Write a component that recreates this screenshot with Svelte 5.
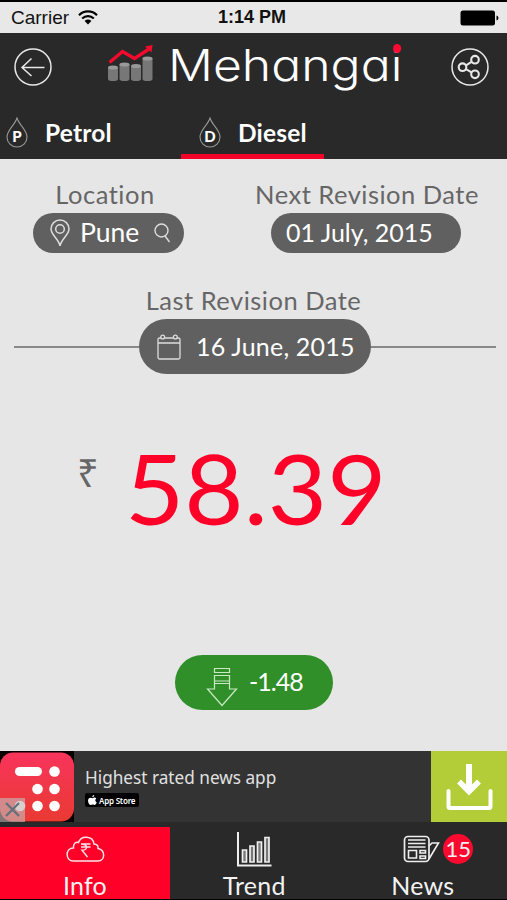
<script lang="ts">
  let city = 'Pune';
  let nextRevision = '01 July, 2015';
  let lastRevision = '16 June, 2015';
  let price = '58.39';
  let change = '-1.48';
  let newsCount = 15;

  let fuel = 'Diesel';
  let page = 'Info';

  const bars = [
    {x: 0, y: 21},
    {x: 11.5, y: 18},
    {x: 23, y: 19.5},
    {x: 34.5, y: 12}
  ];
</script>

<div class="screen">
  <div class="status">
    <span class="carrier">Carrier</span>
    <svg class="wifi" width="20" height="15" viewBox="0 0 20 15" fill="none" stroke="#000" stroke-width="2.2">
      <path d="M1 5.2a12.7 12.7 0 0 1 18 0M4.2 8.5a8.2 8.2 0 0 1 11.6 0"/>
      <path d="M6.6 11a4.8 4.8 0 0 1 6.8 0L10 14.5z" fill="#000" stroke="none"/>
    </svg>
    <span class="time">1:14 PM</span>
    <svg class="battery" width="39" height="16" viewBox="0 0 39 16">
      <rect x=".5" y=".5" width="34.5" height="15" rx="2.5"/>
      <path d="M36.5 5.5c2.6 1 2.6 4 0 5z"/>
    </svg>
  </div>

  <header>
    <div class="brand-row">
      <a class="round" href="#back" aria-label="Back">
        <svg width="38" height="38" viewBox="0 0 38 38" fill="none" stroke="#e8e8e8" stroke-width="1.5">
          <circle cx="19" cy="19" r="18"/>
          <path d="M30.5 19.5H8M17.5 10.5L8 19.5l9.5 8.5"/>
        </svg>
      </a>
      <div class="brand">
        <svg width="47" height="38" viewBox="0 0 47 38">
          {#each bars as bar}
            <path d="M{bar.x} {bar.y + 1.5}v{32.5 - bar.y}a5 2 0 0 0 10 0v-{32.5 - bar.y}z" fill="#777"/>
            <ellipse cx={bar.x + 5} cy={bar.y + 1.5} rx="5" ry="2" fill="#999"/>
          {/each}
          <path d="M1.5 17.5L14.5 6.5 26.5 13.5 41 4" fill="none" stroke="#f30a2c" stroke-width="3.3"/>
          <path d="M37 1.5L44.5 0 43.5 7.5z" fill="#f30a2c"/>
        </svg>
        <h1>Mehangai<i></i></h1>
      </div>
      <a class="round" href="#share" aria-label="Share">
        <svg width="38" height="38" viewBox="0 0 38 38" fill="none" stroke="#e8e8e8" stroke-width="1.5">
          <circle cx="19" cy="19" r="18"/>
          <g stroke-width="2.1">
            <circle cx="11.5" cy="19.2" r="3.8"/>
            <circle cx="24" cy="11.7" r="3.8"/>
            <circle cx="24" cy="26.3" r="3.8"/>
            <path d="M15 17.3l5.5-3.4M15 21.2l5.5 3.2"/>
          </g>
        </svg>
      </a>
    </div>
    <nav class="fuels">
      {#each ['Petrol', 'Diesel'] as name}
        <a href="#{name}" class="fuel" class:active={fuel === name}>
          <span class="drop">
            <svg width="22" height="31" viewBox="0 0 22 31" fill="none" stroke="#999" stroke-width="1.1">
              <path d="M11 1C9 8 1 13 1 20a10 10 0 0 0 20 0C21 13 13 8 11 1z"/>
            </svg>
            <b>{name[0]}</b>
          </span>
          <span class="fuel-name">{name}</span>
        </a>
      {/each}
    </nav>
  </header>

  <main>
    <div class="top-info">
      <section class="location">
        <h2>Location</h2>
        <div class="pill">
          <svg class="pin" width="20" height="28" viewBox="0 0 20 28" fill="none" stroke="#ddd" stroke-width="1.5">
            <path d="M10 27C9 20 1 16 1 10a9 9 0 0 1 18 0c0 6-8 10-9 17z"/>
            <circle cx="10" cy="10" r="4.3"/>
          </svg>
          <span>{city}</span>
          <svg class="search" width="17" height="20" viewBox="0 0 17 20" fill="none" stroke="#ddd" stroke-width="1.4">
            <circle cx="7.5" cy="7.5" r="6.5"/>
            <path d="M11 13l4.5 6"/>
          </svg>
        </div>
      </section>
      <section class="next">
        <h2>Next Revision Date</h2>
        <div class="pill"><span>{nextRevision}</span></div>
      </section>
    </div>

    <section class="last">
      <h2>Last Revision Date</h2>
      <div class="line-row">
        <div class="line"></div>
        <div class="pill big">
          <svg width="24" height="26" viewBox="0 0 24 26" fill="none" stroke="#ddd" stroke-width="1.3">
            <path d="M4 4H2.5Q1 4 1 5.5v18Q1 25 2.5 25h19q1.5 0 1.5-1.5v-18Q23 4 21.5 4H20M7.5 4h9M1 9h22"/>
            <circle cx="5.7" cy="3" r="1.9"/>
            <circle cx="18.3" cy="3" r="1.9"/>
          </svg>
          <span>{lastRevision}</span>
        </div>
        <div class="line"></div>
      </div>
    </section>

    <div class="price">
      <span class="rupee">₹</span>
      <span class="amount">{price}</span>
    </div>

    <div class="change">
      <svg width="32" height="40" viewBox="0 0 32 40" fill="none" stroke="#c9eac5" stroke-width="1.2">
        <path d="M8.5 1.5h15v4h-15zM8.5 8.5h15v5.5h-15zM8.5 14v2.5h15V14M8.5 16.5V22H1.5L16 38.5 30.5 22h-7v-5.5"/>
      </svg>
      <span>{change}</span>
    </div>
  </main>

  <div class="ad">
    <div class="ad-icon">
      <svg width="74" height="71" viewBox="0 0 74 71">
        <defs>
          <linearGradient id="ad-red" x1="0" y1="0" x2="0" y2="1">
            <stop offset="0" stop-color="#f8345c"/>
            <stop offset="1" stop-color="#e93a32"/>
          </linearGradient>
        </defs>
        <rect width="74" height="71" fill="#080000"/>
        <rect y="1.5" width="74" height="69" rx="13" fill="url(#ad-red)"/>
        <g fill="#fff">
          <rect x="15" y="16" width="27" height="9" rx="4.5"/>
          <circle cx="54.5" cy="20.5" r="5.3"/>
          <circle cx="37.5" cy="38" r="5.3"/>
          <circle cx="54.5" cy="38" r="5.3"/>
          <circle cx="20" cy="55" r="5.3"/>
          <circle cx="37.5" cy="55" r="5.3"/>
          <circle cx="54.5" cy="55" r="5.3"/>
        </g>
        <rect y="47" width="25" height="24" fill="#c6b5b5" opacity=".65"/>
        <path d="M6 52l13 13M19 52L6 65" stroke="#61717c" stroke-width="2.2"/>
      </svg>
    </div>
    <div class="ad-text">
      <p>Highest rated news app</p>
      <span class="store">
        <svg width="9" height="10" viewBox="0 0 18 20" fill="#fff">
          <path d="M12.5 0c0 2.5-1.7 4.5-4 4.5C8.3 2.3 10.2.3 12.5 0zM16.5 7c-3 2-2.5 6 1 7.3C16.5 17 14.7 20 12.8 20c-1.4 0-1.9-.8-3.5-.8S7 20 5.8 20C3 20 0 15.5 0 11.3 0 7.5 2.5 5.3 5.2 5.3c1.6 0 2.8 1 3.9 1 1 0 2.4-1.1 4.2-1.1 1.3 0 2.5.7 3.2 1.8z"/>
        </svg>
        App Store
      </span>
    </div>
    <a class="download" href="#download" aria-label="Download">
      <svg width="48" height="48" viewBox="0 0 48 48" fill="none" stroke="#fff">
        <path d="M3.5 28v15.5q0 1.5 1.5 1.5h39q1.5 0 1.5-1.5V28" stroke-width="4" stroke-linecap="round"/>
        <path d="M24 1v26" stroke-width="6"/>
        <path d="M14 18.5L24 28.5 34 18.5" stroke-width="5.5"/>
      </svg>
    </a>
  </div>

  <nav class="tabs">
    <a href="#info" class="tab" class:active={page === 'Info'}>
      <span class="icon">
        <svg width="39" height="26" viewBox="0 0 39 26" fill="none" stroke="#ffe5e8" stroke-width="1.5">
          <path d="M7.5 25C-1 25-1 12 7.5 12 7 7 10.5 5.5 12.5 6.5 15-1 27-.5 28 8c3 0 4.3 2 4 4.5 8 2 7 12.5 0 12.5z"/>
          <path d="M15 8h9.5M15 11h9.5M15 8c7 0 7.5 6.3 1 6.3L21.5 21" stroke-width="1.4"/>
        </svg>
      </span>
      <span class="label">Info</span>
    </a>
    <a href="#trend" class="tab" class:active={page === 'Trend'}>
      <span class="icon">
        <svg width="36" height="36" viewBox="0 0 36 36" fill="none" stroke="#eee" stroke-width="1.7">
          <path d="M2 1v33.5h33.5" stroke-width="2"/>
          <path d="M6.5 31V19h4v12zM14 31V15h4v16zM21.5 31V11h4v20zM29 31V6.5h4V31z" fill="#777"/>
        </svg>
      </span>
      <span class="label">Trend</span>
    </a>
    <a href="#news" class="tab" class:active={page === 'News'}>
      <span class="icon news">
        <svg width="38" height="28" viewBox="0 0 38 28" fill="none" stroke="#eee" stroke-width="1.7">
          <rect x="1.5" y="1.5" width="24.5" height="25" rx="3.5"/>
          <path d="M5 5h17.5M5 8.5h17.5M5 12h17.5M5.5 15.5h8v7.5h-8zM17 15.5h5.5V18H17zM17 21h5.5v2.5H17zM26 24l9.5-16H29l-3 3" stroke-width="1.6"/>
        </svg>
        <span class="badge">{newsCount}</span>
      </span>
      <span class="label">News</span>
    </a>
  </nav>
</div>

<style>
  :global(body) {
    margin: 0;
  }
  .screen {
    width: 507px;
    height: 900px;
    box-sizing: border-box;
    border-top: 2px solid #000;
    border-bottom: 1px solid #000;
    display: flex;
    flex-direction: column;
    overflow: hidden;
    background: #e6e6e6;
    font-family: Lato, "Noto Sans", sans-serif;
    font-variant-ligatures: none;
  }
  a {
    color: inherit;
    text-decoration: none;
  }
  svg {
    display: block;
    flex: none;
  }
  h1, h2, p {
    margin: 0;
    font-weight: 400;
  }

  .status {
    height: 31px;
    display: flex;
    align-items: center;
    padding: 0 8px 0 11px;
    box-sizing: border-box;
    background: #e8e8e8;
    color: #111;
    font: 19px/31px "Liberation Sans", sans-serif;
  }
  .carrier {
    line-height: 33px;
  }
  .wifi {
    margin: -1px 0 0 9px;
  }
  .time {
    flex: 1;
    padding-left: 120px;
    font-weight: 700;
    font-size: 18px;
    line-height: 33px;
  }

  header {
    height: 126px;
    background: #292929;
    color: #fff;
  }
  .brand-row {
    height: 72px;
    display: flex;
    align-items: flex-start;
    padding: 15px 18px 0 14px;
    justify-content: space-between;
    box-sizing: border-box;
  }
  .brand {
    display: flex;
    width: 293px;
    margin: -3px 0 0 5px;
  }
  .brand h1 {
    position: relative;
    margin: -6px 0 0 13px;
    font-family: Inter, Lato, sans-serif;
    font-feature-settings: "cv11";
    font-size: 43px;
    font-weight: 300;
    line-height: 52px;
    height: 52px;
    transform: scaleX(1.16);
    transform-origin: 0 0;
  }
  .brand h1 i {
    position: absolute;
    right: 1px;
    top: 5px;
    width: 7px;
    height: 9px;
    border-radius: 50%;
    background: #ff0a30;
  }
  .fuels {
    height: 54px;
    display: flex;
  }
  .fuel {
    width: 143px;
    margin-right: 38px;
    box-sizing: border-box;
    display: flex;
    align-items: center;
    padding: 6px 0 0 6px;
    border-bottom: 5px solid transparent;
  }
  .fuel.active {
    padding-left: 18px;
    border-color: #f30328;
  }
  .drop {
    position: relative;
  }
  .drop b {
    position: absolute;
    top: 11px;
    left: 0;
    width: 22px;
    text-align: center;
    font: 900 15px/17px Lato, sans-serif;
  }
  .fuel-name {
    margin-left: 17px;
    font-size: 24.5px;
    font-weight: 700;
    line-height: 30px;
    letter-spacing: .2px;
  }

  main {
    height: 592px;
    color: #666;
  }
  h2 {
    font-size: 25.5px;
    line-height: 30px;
    letter-spacing: .5px;
    text-align: center;
    white-space: nowrap;
  }
  .top-info {
    display: flex;
    padding-top: 20px;
  }
  .location {
    width: 150px;
    margin-left: 33px;
  }
  .location h2 {
    margin-right: 6px;
  }
  .next {
    width: 226px;
    margin-left: 71px;
  }
  .next .pill {
    width: 190px;
    margin-left: 17px;
    padding-left: 15px;
  }
  .pill {
    display: flex;
    align-items: center;
    box-sizing: border-box;
    height: 40px;
    margin-top: 4px;
    border-radius: 20px;
    background: #606060;
    color: #fff;
    font-size: 25px;
    white-space: nowrap;
  }
  .location .pill {
    padding-left: 17px;
    width: 151px;
  }
  .location .pill span {
    margin: 0 auto 2px 10px;
    font-size: 26.5px;
  }
  .pill span {
    line-height: 36px;
    margin-bottom: 2px;
  }
  .search {
    margin-right: 13px;
  }

  .last {
    margin-top: 32px;
  }
  .line-row {
    display: flex;
    align-items: center;
    margin-top: 4px;
    padding: 0 11px 0 14px;
  }
  .line {
    flex: 1;
    height: 2px;
    background: #888;
  }
  .pill.big {
    width: 232px;
    height: 55px;
    margin-top: 0;
    border-radius: 28px;
    padding-left: 18px;
  }
  .pill.big span {
    margin-left: 15px;
    letter-spacing: .2px;
  }

  .price {
    height: 132px;
    margin-top: 48px;
    padding-left: 77px;
    display: flex;
    align-items: flex-start;
  }
  .rupee {
    width: 48px;
    padding-top: 31px;
    font: 38px/38px "Noto Sans", sans-serif;
  }
  .amount {
    color: #ff0029;
    font-size: 97px;
    line-height: 132px;
    transform: scaleX(1.055);
    transform-origin: 0 0;
  }

  .change {
    display: flex;
    align-items: center;
    width: 158px;
    height: 55px;
    margin: 101px 0 0 175px;
    border-radius: 28px;
    background: #308f28;
    color: #fff;
    font-size: 25px;
    box-sizing: border-box;
    padding-left: 31px;
  }
  .change svg {
    margin-top: 8px;
  }
  .change span {
    margin: -3px 0 0 11px;
    letter-spacing: -1px;
  }

  .ad {
    height: 71px;
    display: flex;
    background: #333;
    color: #e1e1e1;
  }
  .ad-text {
    flex: 1;
    padding: 15px 0 0 11px;
    font-family: "Noto Sans", "Open Sans", sans-serif;
  }
  .ad-text p {
    font-size: 17.2px;
    line-height: 24px;
  }
  .store {
    display: flex;
    align-items: center;
    gap: 2px;
    box-sizing: border-box;
    width: 54px;
    height: 14px;
    margin-top: 3px;
    padding-left: 3px;
    border-radius: 2px;
    background: #000;
    color: #fff;
    font-size: 8px;
    font-weight: 600;
    letter-spacing: -.2px;
    white-space: nowrap;
  }
  .download {
    width: 76px;
    display: flex;
    justify-content: center;
    align-items: center;
    background: #b3cd38;
  }

  .tabs {
    display: flex;
    height: 77px;
    padding-top: 5px;
    box-sizing: border-box;
    background: #292929;
    color: #f2f2f2;
  }
  .tab {
    flex: 1;
    display: flex;
    flex-direction: column;
    align-items: center;
  }
  .tab.active {
    flex: none;
    width: 170px;
    background: #ff0029;
  }
  .icon {
    height: 45px;
    display: flex;
    align-items: center;
  }
  .label {
    font-size: 25px;
    line-height: 28px;
    letter-spacing: .2px;
  }
  .news {
    gap: 2px;
    margin-left: 31px;
  }
  .badge {
    width: 30px;
    height: 30px;
    border-radius: 50%;
    background: #fb092e;
    font-size: 22px;
    line-height: 29px;
    text-align: center;
  }
</style>
